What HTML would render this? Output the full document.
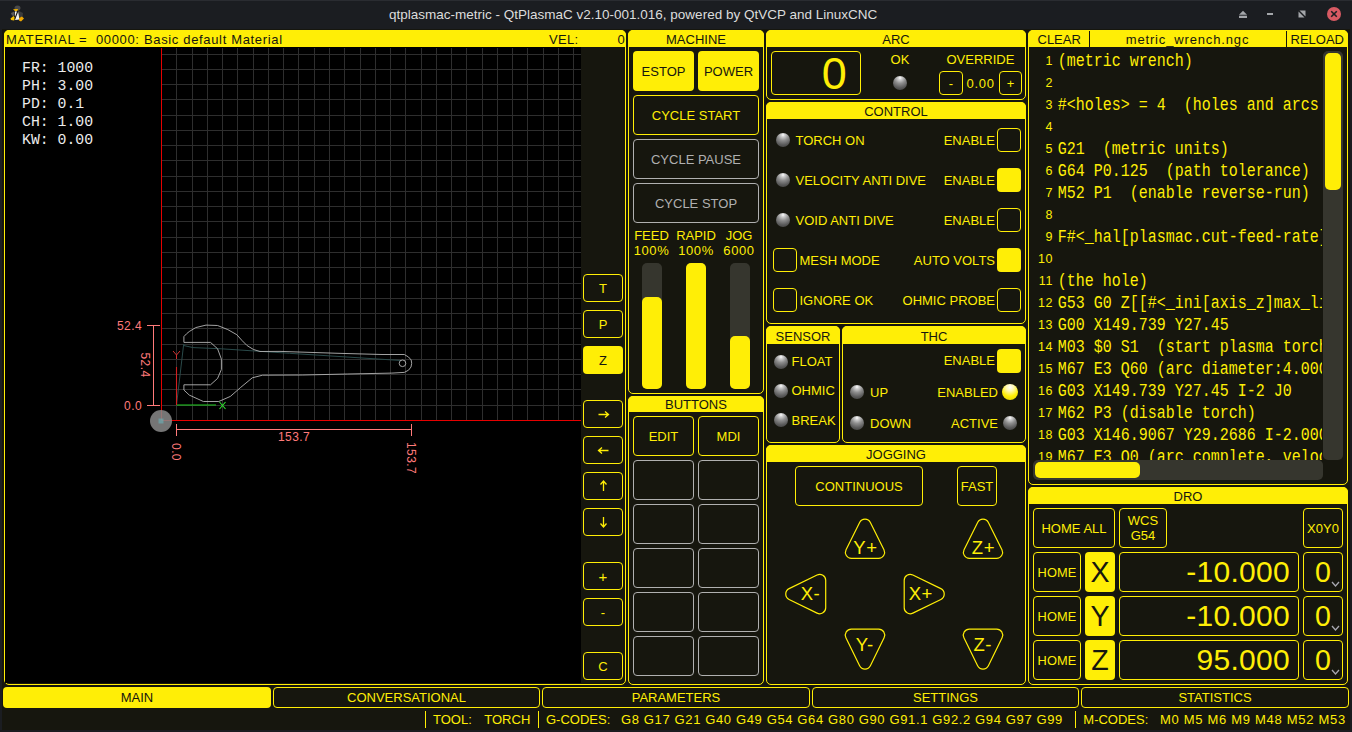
<!DOCTYPE html><html><head><meta charset="utf-8"><style>
*{box-sizing:border-box;margin:0;padding:0}
html,body{width:1352px;height:732px;overflow:hidden;background:#16160e;font-family:"Liberation Sans",sans-serif;font-size:13px;color:#ffee06}
div{position:absolute}
.fr{border:1px solid #ffee06;border-radius:5px;background:#16160e}
.hd{background:#ffee06;color:#16160e;border-radius:5px 5px 0 0;text-align:center;line-height:17px;font-size:13px;white-space:pre}
.bt{border:1px solid #ffee06;border-radius:4px;display:flex;align-items:center;justify-content:center;color:#ffee06;white-space:pre;text-align:center}
.bf{background:#ffee06;border-radius:4px;display:flex;align-items:center;justify-content:center;color:#16160e;white-space:pre}
.bd{border:1px solid #b0b0b0;border-radius:4px;display:flex;align-items:center;justify-content:center;color:#b0b0b0;white-space:pre}
.t{white-space:pre;line-height:1}
.led{border-radius:50%;background:radial-gradient(circle at 50% 14%, #ffffff 0%, #d4d4d4 12%, #8e8e8e 40%, #585858 72%, #3c3c3a 100%)}
.ledon{border-radius:50%;background:radial-gradient(circle at 50% 20%, #ffffff 0%, #fff8b0 25%, #ffee06 60%, #e0d000 100%)}
.cb{border:1px solid #ffee06;border-radius:4px}
.cbf{background:#ffee06;border-radius:4px}
.mono{font-family:"Liberation Mono",monospace}
</style></head><body>

<div class="" style="left:0px;top:0px;width:1352px;height:29px;background:#1b1d21;border-top:1px solid #2a2c31"></div>
<div class="t" style="left:389px;top:8px;color:#dcdcdc;font-size:13.5px">qtplasmac-metric - QtPlasmaC v2.10-001.016, powered by QtVCP and LinuxCNC</div>
<svg style="position:absolute;left:0;top:0" width="30" height="28" viewBox="0 0 30 28">
<ellipse cx="17.5" cy="8" rx="3" ry="2.5" fill="#4a4a4a"/>
<path d="M17 10 L23 13 L22.5 17 L18 17 Z" fill="#3c3c3c"/>
<path d="M11 13 L14.5 11.5 L14.5 16 L12 15.5 Z" fill="#5a5a5a"/>
<path d="M13 9.3 L17.5 9 L18.5 10.5 L15.5 11.5 Z" fill="#f2b400"/>
<path d="M15 11.5 L18 11.5 L19.5 19.5 L15 20 Z" fill="#f4f4f4"/>
<path d="M10.5 18.5 L13.5 16 L15.5 18.5 L14 20.5 L11 20 Z" fill="#f6c000"/>
<path d="M19 18 L22 16.5 L24 18.5 L21 21.5 L19 20.5 Z" fill="#f0a800"/>
<path d="M18 10.5 L14.6 19.5" stroke="#111" stroke-width="1.1"/>
</svg>
<svg style="position:absolute;left:1236px;top:8px" width="14" height="14" viewBox="0 0 14 14"><path d="M3 6.7 L7 2.7 L11 6.7 Z" fill="#a4a6aa"/><rect x="3" y="7.7" width="8" height="2.3" fill="#a4a6aa"/></svg>
<div style="left:1267px;top:12.6px;width:6.3px;height:2.4px;background:#a4a6aa"></div>
<svg style="position:absolute;left:1296px;top:8px" width="12" height="12" viewBox="0 0 12 12"><path d="M3.5 2.5 H9.5 V8.5 Z" fill="#a4a6aa"/><path d="M2.5 3.5 V9.5 H8.5 Z" fill="#a4a6aa"/></svg>
<svg style="position:absolute;left:1326px;top:6px" width="16" height="16" viewBox="0 0 16 16"><circle cx="8" cy="8" r="7" fill="#d85a63"/><path d="M5.2 5.2 L10.8 10.8 M10.8 5.2 L5.2 10.8" stroke="#1c1e22" stroke-width="1.6"/></svg>
<div class="fr" style="left:4px;top:30px;width:622px;height:655px;"></div>
<div class="hd" style="left:4px;top:30px;width:622px;height:17px;"></div>
<div class="t" style="left:6px;top:33.00px;font-size:13px;color:#16160e;letter-spacing:0.66px">MATERIAL =  00000: Basic default Material</div>
<div class="t" style="left:549px;top:33.00px;font-size:13px;color:#16160e;letter-spacing:0.3px">VEL:</div>
<div class="t" style="left:617.5px;top:33.00px;font-size:13px;color:#16160e">0</div>
<svg style="position:absolute;left:5px;top:47px" width="576" height="636" viewBox="5 47 576 636"><rect x="5" y="47" width="576" height="636" fill="#000"/><path d="M176.50 48V420.5 M192.50 48V420.5 M207.50 48V420.5 M222.50 48V420.5 M237.50 48V420.5 M253.50 48V420.5 M268.50 48V420.5 M283.50 48V420.5 M298.50 48V420.5 M314.50 48V420.5 M329.50 48V420.5 M344.50 48V420.5 M360.50 48V420.5 M375.50 48V420.5 M390.50 48V420.5 M405.50 48V420.5 M421.50 48V420.5 M436.50 48V420.5 M451.50 48V420.5 M466.50 48V420.5 M482.50 48V420.5 M497.50 48V420.5 M512.50 48V420.5 M527.50 48V420.5 M543.50 48V420.5 M558.50 48V420.5 M573.50 48V420.5 M161.5 405.50H581 M161.5 389.50H581 M161.5 374.50H581 M161.5 359.50H581 M161.5 344.50H581 M161.5 328.50H581 M161.5 313.50H581 M161.5 298.50H581 M161.5 283.50H581 M161.5 267.50H581 M161.5 252.50H581 M161.5 237.50H581 M161.5 221.50H581 M161.5 206.50H581 M161.5 191.50H581 M161.5 176.50H581 M161.5 160.50H581 M161.5 145.50H581 M161.5 130.50H581 M161.5 115.50H581 M161.5 99.50H581 M161.5 84.50H581 M161.5 69.50H581 M161.5 54.50H581" stroke="#2e2e2e" stroke-width="1" fill="none"/><path d="M161.5 48V420.5 H581" stroke="#e60000" stroke-width="1" fill="none"/><path d="M176.5 405 L183.7 344 L184 345.6 L193 347.6 L221.4 348.8 L289.5 353.3 L401 360.5" stroke="#2a4a4a" stroke-width="1" fill="none"/><path d="M183.9 336.6 L186.5 333.8 L189.3 331.5 L195.7 327.6 L206 325.1 L217.6 325.5 L227.8 329.6 L236.8 334.7 L242 340.5 L247.1 345.6 L253.5 349.5 L260 351.5 L280 351.4 L338 353.3 L382 354.5 L404.3 354.5 L408.5 357 L411.2 360 L411.7 363.3 L411 367 L408.5 370.2 L404.3 372.4 L391.8 373.1 L347.8 374 L302.8 375 L262.5 375.2 L252.3 377.8 L240.7 387.4 L230.4 396.4 L218.8 401.5 L203.4 401.5 L189.3 395.1 L183.9 390 L183.9 384.8 L210.5 384.8 L217.6 378.4 L221.4 369.4 L221.4 359.1 L217.6 348.8 L210.5 342.4 L183.9 342.4 Z" stroke="#b4b4b4" stroke-width="0.9" fill="none"/><circle cx="402.5" cy="363.3" r="3.3" stroke="#b4b4b4" stroke-width="0.9" fill="none"/><path d="M176.5 405 H216" stroke="#20d020" stroke-width="1.1"/><path d="M176.5 405 V367" stroke="#d02020" stroke-width="1.1"/><path d="M219.5 402 L225.5 409 M225.5 402 L219.5 409" stroke="#30e030" stroke-width="1.1"/><path d="M173 351 L176.5 355 L180 351 M176.5 355 V359" stroke="#d03030" stroke-width="1" fill="none"/><path d="M153.5 325.5 V405.5 M147 325.5 H160 M147 405.5 H160" stroke="#ff7a7a" stroke-width="1"/><path d="M176.5 429.5 H411.5 M176.5 424 V436 M411.5 424 V436" stroke="#ff7a7a" stroke-width="1"/><text x="142" y="330" fill="#ff7a7a" font-family="Liberation Sans" font-size="12" letter-spacing="0.4" text-anchor="end">52.4</text><text x="142" y="410" fill="#ff7a7a" font-family="Liberation Sans" font-size="12" letter-spacing="0.4" text-anchor="end">0.0</text><text x="294" y="441" fill="#ff7a7a" font-family="Liberation Sans" font-size="12" letter-spacing="0.4" text-anchor="middle">153.7</text><text transform="translate(141,365) rotate(90)" fill="#ff7a7a" font-family="Liberation Sans" font-size="12" letter-spacing="0.4" text-anchor="middle">52.4</text><text transform="translate(172,452) rotate(90)" fill="#ff7a7a" font-family="Liberation Sans" font-size="12" letter-spacing="0.4" text-anchor="middle">0.0</text><text transform="translate(407,458) rotate(90)" fill="#ff7a7a" font-family="Liberation Sans" font-size="12" letter-spacing="0.4" text-anchor="middle">153.7</text><circle cx="161" cy="421" r="11" fill="#8a8a8a" fill-opacity="0.85"/><rect x="158.5" y="418.5" width="5" height="5" fill="#6ab0b8" fill-opacity="0.6"/></svg>
<div class="t mono" style="left:22px;top:60.5px;color:#ececec;font-size:14.8px">FR: 1000</div>
<div class="t mono" style="left:22px;top:78.5px;color:#ececec;font-size:14.8px">PH: 3.00</div>
<div class="t mono" style="left:22px;top:96.5px;color:#ececec;font-size:14.8px">PD: 0.1</div>
<div class="t mono" style="left:22px;top:114.5px;color:#ececec;font-size:14.8px">CH: 1.00</div>
<div class="t mono" style="left:22px;top:132.5px;color:#ececec;font-size:14.8px">KW: 0.00</div>
<div class="bt" style="left:583px;top:274px;width:40px;height:28px;">T</div>
<div class="bt" style="left:583px;top:310px;width:40px;height:28px;">P</div>
<div class="bf" style="left:583px;top:346px;width:40px;height:28px;">Z</div>
<div class="bt" style="left:583px;top:400px;width:40px;height:28px;"></div>
<div class="bt" style="left:583px;top:436px;width:40px;height:28px;"></div>
<div class="bt" style="left:583px;top:472px;width:40px;height:28px;"></div>
<div class="bt" style="left:583px;top:508px;width:40px;height:28px;"></div>
<div class="bt" style="left:583px;top:562px;width:40px;height:28px;"><span style="font-size:15px">+</span></div>
<div class="bt" style="left:583px;top:598px;width:40px;height:28px;">-</div>
<div class="bt" style="left:583px;top:652px;width:40px;height:28px;">C</div>
<svg style="position:absolute;left:0;top:0" width="1352" height="732" viewBox="0 0 1352 732"><g stroke="#ffee06" stroke-width="1.3" fill="none"><path d="M598.5 414.5H608.5 M605 411.5 L608.5 414.5 L605 417.5"/><path d="M608.5 450.5H598.5 M602 447.5 L598.5 450.5 L602 453.5"/><path d="M603.5 491V481 M600.5 484.5 L603.5 481 L606.5 484.5"/><path d="M603.5 517V527 M600.5 523.5 L603.5 527 L606.5 523.5"/></g></svg>
<div class="fr" style="left:628px;top:30px;width:136px;height:364px;"></div>
<div class="hd" style="left:628px;top:30px;width:136px;height:17px;padding-top:1px">MACHINE</div>
<div class="bf" style="left:633px;top:51px;width:61px;height:40px;">ESTOP</div>
<div class="bf" style="left:698px;top:51px;width:61px;height:40px;">POWER</div>
<div class="bt" style="left:633px;top:95px;width:126px;height:40px;">CYCLE START</div>
<div class="bd" style="left:633px;top:139px;width:126px;height:40px;">CYCLE PAUSE</div>
<div class="bd" style="left:633px;top:183px;width:126px;height:40px;">CYCLE STOP</div>
<div class="t" style="left:501.5px;top:229.00px;font-size:13px;width:300px;text-align:center;">FEED</div>
<div class="t" style="left:501.5px;top:243.70px;font-size:13px;width:300px;text-align:center;letter-spacing:0.6px">100%</div>
<div class="t" style="left:546px;top:229.00px;font-size:13px;width:300px;text-align:center;">RAPID</div>
<div class="t" style="left:546px;top:243.70px;font-size:13px;width:300px;text-align:center;letter-spacing:0.6px">100%</div>
<div class="t" style="left:589px;top:229.00px;font-size:13px;width:300px;text-align:center;">JOG</div>
<div class="t" style="left:589px;top:243.70px;font-size:13px;width:300px;text-align:center;letter-spacing:0.6px">6000</div>
<div class="" style="left:642px;top:263px;width:20px;height:126px;background:#36362e;border-radius:5px"></div>
<div class="" style="left:642px;top:297px;width:20px;height:92px;background:#ffee06;border-radius:5px"></div>
<div class="" style="left:686px;top:263px;width:20px;height:126px;background:#36362e;border-radius:5px"></div>
<div class="" style="left:686px;top:263px;width:20px;height:126px;background:#ffee06;border-radius:5px"></div>
<div class="" style="left:730px;top:263px;width:20px;height:126px;background:#36362e;border-radius:5px"></div>
<div class="" style="left:730px;top:336px;width:20px;height:53px;background:#ffee06;border-radius:5px"></div>
<div class="fr" style="left:628px;top:396px;width:136px;height:289px;"></div>
<div class="hd" style="left:628px;top:396px;width:136px;height:16px;padding-top:0px">BUTTONS</div>
<div class="bt" style="left:633px;top:416px;width:61px;height:40px;">EDIT</div>
<div class="bt" style="left:698px;top:416px;width:61px;height:40px;">MDI</div>
<div class="bd" style="left:633px;top:460px;width:61px;height:40px;"></div>
<div class="bd" style="left:698px;top:460px;width:61px;height:40px;"></div>
<div class="bd" style="left:633px;top:504px;width:61px;height:40px;"></div>
<div class="bd" style="left:698px;top:504px;width:61px;height:40px;"></div>
<div class="bd" style="left:633px;top:548px;width:61px;height:40px;"></div>
<div class="bd" style="left:698px;top:548px;width:61px;height:40px;"></div>
<div class="bd" style="left:633px;top:592px;width:61px;height:40px;"></div>
<div class="bd" style="left:698px;top:592px;width:61px;height:40px;"></div>
<div class="bd" style="left:633px;top:636px;width:61px;height:40px;"></div>
<div class="bd" style="left:698px;top:636px;width:61px;height:40px;"></div>
<div class="fr" style="left:766px;top:30px;width:260px;height:70px;"></div>
<div class="hd" style="left:766px;top:30px;width:260px;height:17px;padding-top:1px">ARC</div>
<div class="bt" style="left:771px;top:51px;width:90px;height:44px;"></div>
<div class="t" style="left:821.8px;top:50.51px;font-size:45px;">0</div>
<div class="t" style="left:750px;top:53.00px;font-size:13px;width:300px;text-align:center;">OK</div>
<div class="t" style="left:946.5px;top:53.00px;font-size:13px;">OVERRIDE</div>
<div class="led" style="left:893px;top:76px;width:14px;height:14px;"></div>
<div class="bt" style="left:939px;top:71px;width:24px;height:24px;">-</div>
<div class="t" style="left:966.5px;top:77.00px;font-size:13px;letter-spacing:0.7px">0.00</div>
<div class="bt" style="left:999px;top:71px;width:23px;height:24px;">+</div>
<div class="fr" style="left:766px;top:102px;width:260px;height:222px;"></div>
<div class="hd" style="left:766px;top:102px;width:260px;height:17px;padding-top:1px">CONTROL</div>
<div class="led" style="left:775.5px;top:133px;width:14.0px;height:14px;"></div>
<div class="t" style="left:795.5px;top:134.00px;font-size:13px;">TORCH ON</div>
<div class="t" style="left:695px;top:134.00px;font-size:13px;width:300px;text-align:right;">ENABLE</div>
<div class="cb" style="left:997px;top:128px;width:24px;height:24px;"></div>
<div class="led" style="left:775.5px;top:173px;width:14.0px;height:14px;"></div>
<div class="t" style="left:795.5px;top:174.00px;font-size:13px;">VELOCITY ANTI DIVE</div>
<div class="t" style="left:695px;top:174.00px;font-size:13px;width:300px;text-align:right;">ENABLE</div>
<div class="cbf" style="left:997px;top:168px;width:24px;height:24px;"></div>
<div class="led" style="left:775.5px;top:213px;width:14.0px;height:14px;"></div>
<div class="t" style="left:795.5px;top:214.00px;font-size:13px;">VOID ANTI DIVE</div>
<div class="t" style="left:695px;top:214.00px;font-size:13px;width:300px;text-align:right;">ENABLE</div>
<div class="cb" style="left:997px;top:208px;width:24px;height:24px;"></div>
<div class="cb" style="left:773px;top:248px;width:24px;height:24px;"></div>
<div class="t" style="left:799.5px;top:254.00px;font-size:13px;">MESH MODE</div>
<div class="t" style="left:695px;top:254.00px;font-size:13px;width:300px;text-align:right;">AUTO VOLTS</div>
<div class="cbf" style="left:997px;top:248px;width:24px;height:24px;"></div>
<div class="cb" style="left:773px;top:288px;width:24px;height:24px;"></div>
<div class="t" style="left:799.5px;top:294.00px;font-size:13px;">IGNORE OK</div>
<div class="t" style="left:695px;top:294.00px;font-size:13px;width:300px;text-align:right;">OHMIC PROBE</div>
<div class="cb" style="left:997px;top:288px;width:24px;height:24px;"></div>
<div class="fr" style="left:766px;top:326px;width:74px;height:117px;"></div>
<div class="hd" style="left:766px;top:326px;width:74px;height:18px;padding-top:1.5px">SENSOR</div>
<div class="led" style="left:773.5px;top:354.5px;width:14.0px;height:14.0px;"></div>
<div class="t" style="left:791.5px;top:355.00px;font-size:13px;">FLOAT</div>
<div class="led" style="left:773.5px;top:383.5px;width:14.0px;height:14.0px;"></div>
<div class="t" style="left:791.5px;top:384.00px;font-size:13px;">OHMIC</div>
<div class="led" style="left:773.5px;top:413px;width:14.0px;height:14px;"></div>
<div class="t" style="left:791.5px;top:413.50px;font-size:13px;">BREAK</div>
<div class="fr" style="left:842px;top:326px;width:184px;height:117px;"></div>
<div class="hd" style="left:842px;top:326px;width:184px;height:18px;padding-top:1.5px">THC</div>
<div class="t" style="left:695px;top:354.00px;font-size:13px;width:300px;text-align:right;">ENABLE</div>
<div class="cbf" style="left:997px;top:349px;width:24px;height:24px;"></div>
<div class="led" style="left:850px;top:384.5px;width:14px;height:14.0px;"></div>
<div class="t" style="left:870px;top:386.00px;font-size:13px;">UP</div>
<div class="led" style="left:850px;top:416px;width:14px;height:14px;"></div>
<div class="t" style="left:870px;top:417.00px;font-size:13px;">DOWN</div>
<div class="t" style="left:698px;top:386.00px;font-size:13px;width:300px;text-align:right;">ENABLED</div>
<div class="ledon" style="left:1002px;top:383.5px;width:16px;height:16.0px;"></div>
<div class="t" style="left:698px;top:417.00px;font-size:13px;width:300px;text-align:right;">ACTIVE</div>
<div class="led" style="left:1003px;top:416px;width:14px;height:14px;"></div>
<div class="fr" style="left:766px;top:445px;width:260px;height:240px;"></div>
<div class="hd" style="left:766px;top:445px;width:260px;height:17px;padding-top:1px">JOGGING</div>
<div class="bt" style="left:795px;top:466px;width:128px;height:40px;">CONTINUOUS</div>
<div class="bt" style="left:957px;top:466px;width:40px;height:40px;">FAST</div>
<svg style="position:absolute;left:0;top:0" width="1352" height="732" viewBox="0 0 1352 732"><path d="M859.63 522.50 A6 6 0 0 1 870.37 522.50 L883.96 549.72 A6 6 0 0 1 878.60 558.40 L851.40 558.40 A6 6 0 0 1 846.04 549.72 Z M977.63 522.50 A6 6 0 0 1 988.37 522.50 L1001.96 549.72 A6 6 0 0 1 996.60 558.40 L969.40 558.40 A6 6 0 0 1 964.04 549.72 Z M859.61 665.76 A6 6 0 0 0 870.39 665.76 L884.08 637.73 A6 6 0 0 0 878.69 629.10 L851.31 629.10 A6 6 0 0 0 845.92 637.73 Z M977.61 665.76 A6 6 0 0 0 988.39 665.76 L1002.08 637.73 A6 6 0 0 0 996.69 629.10 L969.31 629.10 A6 6 0 0 0 963.92 637.73 Z M789.11 588.66 A6 6 0 0 0 789.11 599.44 L817.06 613.12 A6 6 0 0 0 825.70 607.73 L825.70 580.37 A6 6 0 0 0 817.06 574.98 Z M940.86 588.66 A6 6 0 0 1 940.86 599.44 L912.83 613.13 A6 6 0 0 1 904.20 607.74 L904.20 580.36 A6 6 0 0 1 912.83 574.97 Z" stroke="#ffee06" stroke-width="1.2" fill="none"/></svg>
<div class="t" style="left:715.4px;top:538.84px;font-size:18.5px;width:300px;text-align:center;letter-spacing:0.5px">Y+</div>
<div class="t" style="left:833.4px;top:538.84px;font-size:18.5px;width:300px;text-align:center;letter-spacing:0.5px">Z+</div>
<div class="t" style="left:660.5px;top:585.14px;font-size:18.5px;width:300px;text-align:center;letter-spacing:0.5px">X-</div>
<div class="t" style="left:770.8px;top:585.14px;font-size:18.5px;width:300px;text-align:center;letter-spacing:0.5px">X+</div>
<div class="t" style="left:714.7px;top:635.64px;font-size:18.5px;width:300px;text-align:center;letter-spacing:0.5px">Y-</div>
<div class="t" style="left:832.7px;top:635.64px;font-size:18.5px;width:300px;text-align:center;letter-spacing:0.5px">Z-</div>
<div class="fr" style="left:1028px;top:30px;width:320px;height:455px;"></div>
<div class="hd" style="left:1028px;top:30px;width:320px;height:17px;"></div>
<div class="t" style="left:1037.5px;top:33.00px;font-size:13px;color:#16160e">CLEAR</div>
<div class="" style="left:1089px;top:31px;width:1px;height:16px;background:#16160e"></div>
<div class="t" style="left:1037.5px;top:33.00px;font-size:13px;width:300px;text-align:center;color:#16160e;letter-spacing:0.85px">metric_wrench.ngc</div>
<div class="" style="left:1286px;top:31px;width:1px;height:16px;background:#16160e"></div>
<div class="t" style="left:1290.5px;top:33.00px;font-size:13px;color:#16160e">RELOAD</div>
<div style="left:1030px;top:48px;width:292px;height:412px;overflow:hidden">
<div class="t" style="left:-277px;width:300px;top:7.12px;text-align:right;font-size:12.5px;letter-spacing:0.6px">1</div>
<div class="t mono" style="left:27.8px;top:6.90px;font-size:15px;transform-origin:0 11.5px;transform:scaleY(1.195)">(metric wrench)</div>
<div class="t" style="left:-277px;width:300px;top:29.12px;text-align:right;font-size:12.5px;letter-spacing:0.6px">2</div>
<div class="t mono" style="left:27.8px;top:28.90px;font-size:15px;transform-origin:0 11.5px;transform:scaleY(1.195)"></div>
<div class="t" style="left:-277px;width:300px;top:51.12px;text-align:right;font-size:12.5px;letter-spacing:0.6px">3</div>
<div class="t mono" style="left:27.8px;top:50.90px;font-size:15px;transform-origin:0 11.5px;transform:scaleY(1.195)">#&lt;holes&gt; = 4  (holes and arcs &lt; 32.5 mm diameter)</div>
<div class="t" style="left:-277px;width:300px;top:73.12px;text-align:right;font-size:12.5px;letter-spacing:0.6px">4</div>
<div class="t mono" style="left:27.8px;top:72.90px;font-size:15px;transform-origin:0 11.5px;transform:scaleY(1.195)"></div>
<div class="t" style="left:-277px;width:300px;top:95.12px;text-align:right;font-size:12.5px;letter-spacing:0.6px">5</div>
<div class="t mono" style="left:27.8px;top:94.90px;font-size:15px;transform-origin:0 11.5px;transform:scaleY(1.195)">G21  (metric units)</div>
<div class="t" style="left:-277px;width:300px;top:117.12px;text-align:right;font-size:12.5px;letter-spacing:0.6px">6</div>
<div class="t mono" style="left:27.8px;top:116.90px;font-size:15px;transform-origin:0 11.5px;transform:scaleY(1.195)">G64 P0.125  (path tolerance)</div>
<div class="t" style="left:-277px;width:300px;top:139.12px;text-align:right;font-size:12.5px;letter-spacing:0.6px">7</div>
<div class="t mono" style="left:27.8px;top:138.90px;font-size:15px;transform-origin:0 11.5px;transform:scaleY(1.195)">M52 P1  (enable reverse-run)</div>
<div class="t" style="left:-277px;width:300px;top:161.12px;text-align:right;font-size:12.5px;letter-spacing:0.6px">8</div>
<div class="t mono" style="left:27.8px;top:160.90px;font-size:15px;transform-origin:0 11.5px;transform:scaleY(1.195)"></div>
<div class="t" style="left:-277px;width:300px;top:183.12px;text-align:right;font-size:12.5px;letter-spacing:0.6px">9</div>
<div class="t mono" style="left:27.8px;top:182.90px;font-size:15px;transform-origin:0 11.5px;transform:scaleY(1.195)">F#&lt;_hal[plasmac.cut-feed-rate]&gt;</div>
<div class="t" style="left:-277px;width:300px;top:205.12px;text-align:right;font-size:12.5px;letter-spacing:0.6px">10</div>
<div class="t mono" style="left:27.8px;top:204.90px;font-size:15px;transform-origin:0 11.5px;transform:scaleY(1.195)"></div>
<div class="t" style="left:-277px;width:300px;top:227.12px;text-align:right;font-size:12.5px;letter-spacing:0.6px">11</div>
<div class="t mono" style="left:27.8px;top:226.90px;font-size:15px;transform-origin:0 11.5px;transform:scaleY(1.195)">(the hole)</div>
<div class="t" style="left:-277px;width:300px;top:249.12px;text-align:right;font-size:12.5px;letter-spacing:0.6px">12</div>
<div class="t mono" style="left:27.8px;top:248.90px;font-size:15px;transform-origin:0 11.5px;transform:scaleY(1.195)">G53 G0 Z[[#&lt;_ini[axis_z]max_limit&gt; - 5] * 1]</div>
<div class="t" style="left:-277px;width:300px;top:271.12px;text-align:right;font-size:12.5px;letter-spacing:0.6px">13</div>
<div class="t mono" style="left:27.8px;top:270.90px;font-size:15px;transform-origin:0 11.5px;transform:scaleY(1.195)">G00 X149.739 Y27.45</div>
<div class="t" style="left:-277px;width:300px;top:293.12px;text-align:right;font-size:12.5px;letter-spacing:0.6px">14</div>
<div class="t mono" style="left:27.8px;top:292.90px;font-size:15px;transform-origin:0 11.5px;transform:scaleY(1.195)">M03 $0 S1  (start plasma torch)</div>
<div class="t" style="left:-277px;width:300px;top:315.12px;text-align:right;font-size:12.5px;letter-spacing:0.6px">15</div>
<div class="t mono" style="left:27.8px;top:314.90px;font-size:15px;transform-origin:0 11.5px;transform:scaleY(1.195)">M67 E3 Q60 (arc diameter:4.000, velocity:60%)</div>
<div class="t" style="left:-277px;width:300px;top:337.12px;text-align:right;font-size:12.5px;letter-spacing:0.6px">16</div>
<div class="t mono" style="left:27.8px;top:336.90px;font-size:15px;transform-origin:0 11.5px;transform:scaleY(1.195)">G03 X149.739 Y27.45 I-2 J0</div>
<div class="t" style="left:-277px;width:300px;top:359.12px;text-align:right;font-size:12.5px;letter-spacing:0.6px">17</div>
<div class="t mono" style="left:27.8px;top:358.90px;font-size:15px;transform-origin:0 11.5px;transform:scaleY(1.195)">M62 P3 (disable torch)</div>
<div class="t" style="left:-277px;width:300px;top:381.12px;text-align:right;font-size:12.5px;letter-spacing:0.6px">18</div>
<div class="t mono" style="left:27.8px;top:380.90px;font-size:15px;transform-origin:0 11.5px;transform:scaleY(1.195)">G03 X146.9067 Y29.2686 I-2.0000 J0</div>
<div class="t" style="left:-277px;width:300px;top:403.12px;text-align:right;font-size:12.5px;letter-spacing:0.6px">19</div>
<div class="t mono" style="left:27.8px;top:402.90px;font-size:15px;transform-origin:0 11.5px;transform:scaleY(1.195)">M67 E3 Q0 (arc complete, velocity 100%)</div>
</div>
<div class="" style="left:1323px;top:51px;width:20px;height:409px;background:#36362e;border-radius:5px"></div>
<div class="" style="left:1325px;top:53px;width:16px;height:137px;background:#ffee06;border-radius:5px"></div>
<div class="" style="left:1033px;top:460px;width:290px;height:20px;background:#36362e;border-radius:5px"></div>
<div class="" style="left:1035px;top:462px;width:105px;height:16px;background:#ffee06;border-radius:5px"></div>
<div class="fr" style="left:1028px;top:487px;width:320px;height:198px;"></div>
<div class="hd" style="left:1028px;top:487px;width:320px;height:17px;padding-top:0.5px">DRO</div>
<div class="bt" style="left:1033px;top:508px;width:82px;height:40px;">HOME ALL</div>
<div class="bt" style="left:1119px;top:508px;width:48px;height:40px;line-height:15px">WCS
G54</div>
<div class="bt" style="left:1303px;top:508px;width:40px;height:40px;">X0Y0</div>
<div class="bt" style="left:1033px;top:552px;width:48px;height:40px;"></div>
<div class="t" style="left:907px;top:567.26px;font-size:12.8px;width:300px;text-align:center;letter-spacing:0.1px">HOME</div>
<div class="bf" style="left:1085px;top:552px;width:30px;height:40px;"></div>
<div class="t" style="left:950px;top:557.79px;font-size:28.6px;width:300px;text-align:center;color:#16160e">X</div>
<div class="bt" style="left:1119px;top:552px;width:180px;height:40px;"></div>
<div class="t" style="left:990px;top:556.61px;font-size:30px;width:300px;text-align:right;letter-spacing:0.3px">-10.000</div>
<div class="bt" style="left:1303px;top:552px;width:40px;height:40px;"></div>
<div class="t" style="left:1315.1px;top:557.79px;font-size:28.6px;">0</div>
<svg style="position:absolute;left:1331px;top:581px" width="10" height="7" viewBox="0 0 10 7"><path d="M1 1 L4.5 5 L8 1" stroke="#a8a8b0" stroke-width="1.3" fill="none"/></svg>
<div class="bt" style="left:1033px;top:596px;width:48px;height:40px;"></div>
<div class="t" style="left:907px;top:611.26px;font-size:12.8px;width:300px;text-align:center;letter-spacing:0.1px">HOME</div>
<div class="bf" style="left:1085px;top:596px;width:30px;height:40px;"></div>
<div class="t" style="left:950px;top:601.79px;font-size:28.6px;width:300px;text-align:center;color:#16160e">Y</div>
<div class="bt" style="left:1119px;top:596px;width:180px;height:40px;"></div>
<div class="t" style="left:990px;top:600.61px;font-size:30px;width:300px;text-align:right;letter-spacing:0.3px">-10.000</div>
<div class="bt" style="left:1303px;top:596px;width:40px;height:40px;"></div>
<div class="t" style="left:1315.1px;top:601.79px;font-size:28.6px;">0</div>
<svg style="position:absolute;left:1331px;top:625px" width="10" height="7" viewBox="0 0 10 7"><path d="M1 1 L4.5 5 L8 1" stroke="#a8a8b0" stroke-width="1.3" fill="none"/></svg>
<div class="bt" style="left:1033px;top:640px;width:48px;height:40px;"></div>
<div class="t" style="left:907px;top:655.26px;font-size:12.8px;width:300px;text-align:center;letter-spacing:0.1px">HOME</div>
<div class="bf" style="left:1085px;top:640px;width:30px;height:40px;"></div>
<div class="t" style="left:950px;top:645.79px;font-size:28.6px;width:300px;text-align:center;color:#16160e">Z</div>
<div class="bt" style="left:1119px;top:640px;width:180px;height:40px;"></div>
<div class="t" style="left:990px;top:644.61px;font-size:30px;width:300px;text-align:right;letter-spacing:0.3px">95.000</div>
<div class="bt" style="left:1303px;top:640px;width:40px;height:40px;"></div>
<div class="t" style="left:1315.1px;top:645.79px;font-size:28.6px;">0</div>
<svg style="position:absolute;left:1331px;top:669px" width="10" height="7" viewBox="0 0 10 7"><path d="M1 1 L4.5 5 L8 1" stroke="#a8a8b0" stroke-width="1.3" fill="none"/></svg>
<div class="bf" style="left:3px;top:687px;width:268px;height:21px;">MAIN</div>
<div class="bt" style="left:273px;top:687px;width:267px;height:21px;">CONVERSATIONAL</div>
<div class="bt" style="left:542px;top:687px;width:268px;height:21px;">PARAMETERS</div>
<div class="bt" style="left:812px;top:687px;width:267px;height:21px;">SETTINGS</div>
<div class="bt" style="left:1081px;top:687px;width:268px;height:21px;">STATISTICS</div>
<div class="" style="left:425px;top:711px;width:1px;height:17px;background:#ffee06"></div>
<div class="" style="left:538px;top:711px;width:1px;height:17px;background:#ffee06"></div>
<div class="" style="left:1075px;top:711px;width:1px;height:17px;background:#ffee06"></div>
<div class="t" style="left:433px;top:712.75px;font-size:13px;">TOOL:</div>
<div class="t" style="left:484.3px;top:712.75px;font-size:13px;">TORCH</div>
<div class="t" style="left:546px;top:712.75px;font-size:13px;">G-CODES:</div>
<div class="t" style="left:621px;top:712.75px;font-size:13px;letter-spacing:0.63px">G8 G17 G21 G40 G49 G54 G64 G80 G90 G91.1 G92.2 G94 G97 G99</div>
<div class="t" style="left:1083.3px;top:712.75px;font-size:13px;">M-CODES:</div>
<div class="t" style="left:1160px;top:712.75px;font-size:13px;letter-spacing:0.7px">M0 M5 M6 M9 M48 M52 M53</div>
<div class="" style="left:0px;top:29px;width:2px;height:703px;background:#1b1d21"></div>
<div class="" style="left:1350px;top:29px;width:2px;height:703px;background:#1b1d21"></div>
<div class="" style="left:0px;top:730px;width:1352px;height:2px;background:#1b1d21"></div>
</body></html>
